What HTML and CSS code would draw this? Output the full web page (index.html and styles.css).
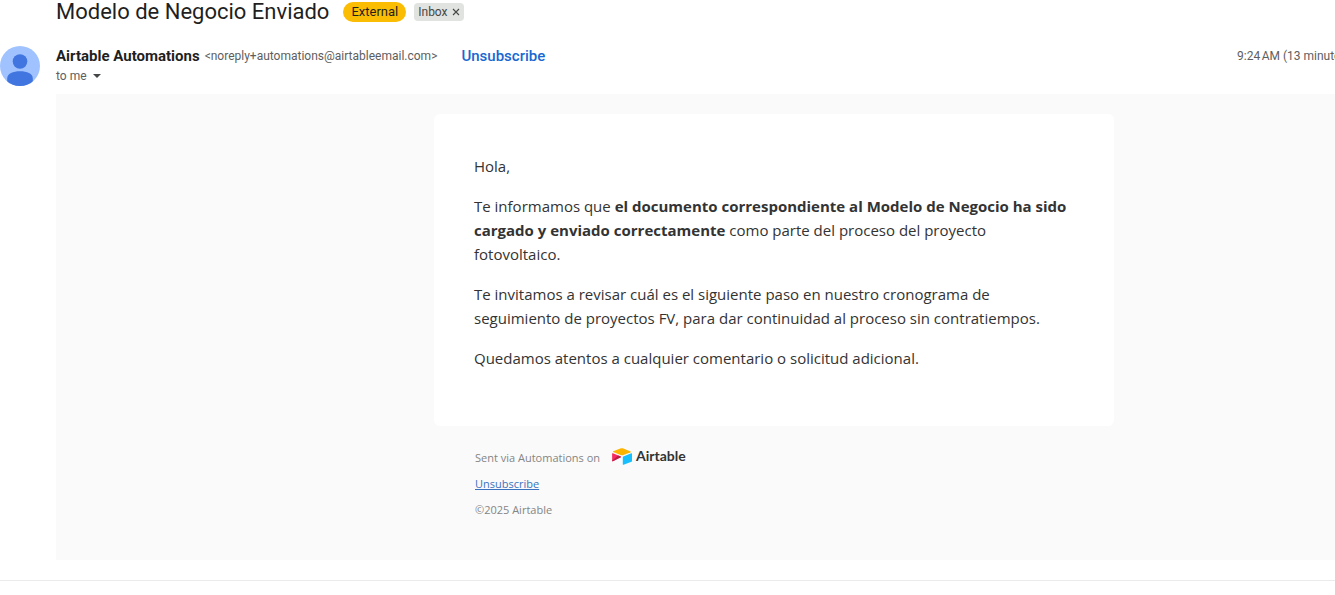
FILE: index.html
```html
<!DOCTYPE html>
<html lang="es">
<head>
<meta charset="utf-8">
<title>Modelo de Negocio Enviado</title>
<link rel="stylesheet" href="styles.css">
</head>
<body>
<main class="pane">
  <div class="thread">
    <header class="subject">
      <h1 class="subject-title">Modelo de Negocio Enviado</h1>
      <span class="tag-external">External</span>
      <span class="tag-inbox">Inbox
        <button class="tag-remove" type="button" aria-label="Remove label Inbox">
          <svg width="8" height="8" viewBox="0 0 8 8"><path d="M1 1l6 6M7 1L1 7" stroke="#444746" stroke-width="1.1"/></svg>
        </button>
      </span>
    </header>
    <article class="message">
      <svg class="avatar" width="40" height="40" viewBox="0 0 40 40" role="img" aria-label="Airtable Automations">
        <defs><clipPath id="disc"><circle cx="20" cy="20" r="20"/></clipPath></defs>
        <g clip-path="url(#disc)">
          <rect width="40" height="40" fill="#a0c3ff"/>
          <circle cx="20" cy="15.500" r="7.300" fill="#4175df"/>
          <path d="M7.200 40V32.500C7.200 27.500 13 25.200 20 25.200S32.800 27.500 32.800 32.500V40Z" fill="#4175df"/>
        </g>
      </svg>
      <div class="message-main">
        <div class="message-head">
          <div class="sender">
            <span class="sender-name">Airtable Automations</span>
            <span class="sender-email">&lt;noreply+automations@airtableemail.com&gt;</span>
            <a class="sender-unsubscribe" href="#">Unsubscribe</a>
          </div>
          <time class="sent-at">9:24&#8239;AM (13 minutes ago)</time>
        </div>
        <button class="recipient" type="button">to me
          <svg width="8" height="4" viewBox="0 0 8 4"><path d="M0 0h8L4 4z" fill="#444746"/></svg>
        </button>
        <div class="mail">
          <section class="card">
            <p>Hola,</p>
            <p>Te informamos que <strong>el documento correspondiente al Modelo de Negocio ha sido cargado y enviado correctamente</strong> como parte del proceso del proyecto<br>fotovoltaico.</p>
            <p>Te invitamos a revisar cuál es el siguiente paso en nuestro cronograma de<br>seguimiento de proyectos FV, para dar continuidad al proceso sin contratiempos.</p>
            <p>Quedamos atentos a cualquier comentario o solicitud adicional.</p>
          </section>
          <footer class="mail-footer">
            <div class="sent-via">Sent via Automations on
              <span class="brand">
                <svg width="20" height="17" viewBox="0 0 20 17"><path d="M9 .3 1.200 3.300q-.8.4 0 .8L9.200 7.200q.8.3 1.600 0l7.800-3q.8-.4 0-.8L10.800.3Q9.900 0 9 .3Z" fill="#fcb400"/><path d="M10.800 9v7.400q.1.600.7.400l8-3.100q.5-.2.500-.7V5.700q-.1-.6-.7-.4l-8 3.100q-.5.200-.5.600Z" fill="#18bfff"/><path d="M.1 5.800v6.900q.1.800.8.500l7.800-3.900q.5-.4 0-.8L.9 5.300Q.1 5 .1 5.800Z" fill="#f82b60"/><path d="M.1 12.700 6 7.400l2.700 1.100q.5.400 0 .8L.9 13.200q-.7.300-.8-.5Z" fill="#ba1e45"/></svg>
                <span class="brand-name">Airtable</span>
              </span>
            </div>
            <a class="footer-link" href="#">Unsubscribe</a>
            <div>©2025 Airtable</div>
          </footer>
        </div>
      </div>
    </article>
  </div>
</main>
</body>
</html>
```

FILE: styles.css
```css
body {
  margin: 0;
  background: #fff;
  color: #1f1f1f;
  font-family: Roboto, "Liberation Sans", sans-serif;
}

button {
  border: 0;
  padding: 0;
  background: none;
  color: inherit;
  font: inherit;
}

.pane {
  overflow: hidden;
}

/* The thread runs on past the right edge of the pane. */
.thread {
  margin-right: -157px;
}

.subject {
  display: flex;
  align-items: center;
  height: 24px;
  padding-left: 56px;
}

.subject-title {
  margin: 0 14px 0 0;
  font-size: 22px;
  font-weight: 400;
  line-height: 24px;
}

.tag-external {
  margin-right: 8px;
  padding: 0 8px;
  border-radius: 10px;
  background: #fbbc04;
  font-size: 13px;
  line-height: 20px;
}

.tag-inbox {
  display: flex;
  align-items: center;
  gap: 4px;
  padding: 0 4px;
  border-radius: 4px;
  background: #e1e3e1;
  color: #444746;
  font-size: 12px;
  line-height: 18px;
}

.tag-remove {
  display: flex;
}

.message {
  display: flex;
  gap: 16px;
  padding: 22px 0 20px;
  border-bottom: 1px solid #ebebeb;
}

.avatar {
  flex: none;
}

.message-main {
  flex: 1;
}

.message-head {
  display: flex;
  justify-content: space-between;
  line-height: 20px;
}

.sender {
  display: flex;
  align-items: center;
}

.sender-name {
  margin-right: 5px;
  font-size: 15px;
  font-weight: 700;
}

.sender-email,
.sent-at,
.recipient {
  color: #5e5e5e;
  font-size: 12px;
}

.sender-unsubscribe {
  margin-left: 24px;
  color: #1967d2;
  font-size: 15px;
  font-weight: 500;
  text-decoration: none;
}

.sent-at {
  width: 255px;
}

.recipient {
  display: flex;
  align-items: center;
  gap: 6px;
  line-height: 20px;
}

.mail {
  margin-top: 8px;
  padding: 20px 20px 37px;
  background: #fafafa;
  font-family: "Open Sans", "Noto Sans", sans-serif;
}

.card {
  box-sizing: border-box;
  max-width: 680px;
  margin: 0 auto;
  padding: 40px 40px 56px;
  border-radius: 6px;
  background: #fff;
  color: #333;
  font-size: 15px;
  line-height: 24px;
}

.card p {
  margin: 0 0 16px;
}

.card p:last-child {
  margin-bottom: 0;
}

.mail-footer {
  box-sizing: border-box;
  max-width: 680px;
  margin: 0 auto;
  padding: 19px 41px 0;
  color: #858585;
  font-size: 11px;
  line-height: 26px;
}

.sent-via {
  display: flex;
  align-items: center;
  height: 26px;
  gap: 12px;
}

.brand {
  display: flex;
  align-items: center;
  gap: 4px;
  padding-bottom: 4px;
  color: #333;
}

.brand-name {
  font-family: Lato, sans-serif;
  font-size: 14px;
  font-weight: 700;
}

.footer-link {
  color: #3b72c0;
}
```
